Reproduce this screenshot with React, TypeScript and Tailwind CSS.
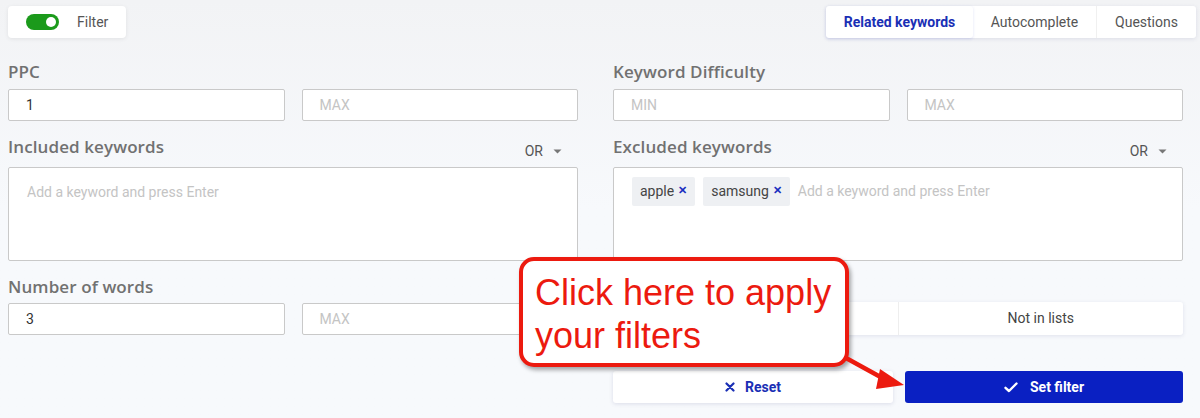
import React from "react";

const labelCls =
  "h-[24px] leading-[24px] text-[17px] font-semibold text-[#717171] [font-family:'Open_Sans',sans-serif] tracking-[0.1px]";
const inputCls =
  "h-[32px] flex-1 border border-[#c9c9c9] rounded-[2px] bg-white flex items-center pl-[17px] text-[14px]";

function NumInput({ value, placeholder }: { value?: string; placeholder: string }) {
  return (
    <div className={inputCls}>
      {value ? (
        <span className="text-[#333]">{value}</span>
      ) : (
        <span className="text-[#c4c4c4]">{placeholder}</span>
      )}
    </div>
  );
}

function OrSelect() {
  return (
    <div className="flex items-center gap-[10px] pr-[16px] translate-y-[4px] text-[14px] text-[#555]">
      <span>OR</span>
      <svg width="9" height="5" viewBox="0 0 9 5">
        <path d="M0.5 0.5 L8.5 0.5 L4.5 4.5 Z" fill="#777" />
      </svg>
    </div>
  );
}

function Tag({ text }: { text: string }) {
  return (
    <div className="h-[29px] flex items-center gap-[4px] px-[8px] bg-[#eef0f3] rounded-[2px] text-[14px] text-[#444]">
      <span>{text}</span>
      <span className="text-[#1a2fc0] text-[11px] font-bold">✕</span>
    </div>
  );
}

export default function App() {
  return (
    <div className="w-[1200px] h-[418px] relative overflow-hidden bg-gradient-to-b from-[#f2f3f5] via-[#f7f9fc] to-[#f7f9fc] [font-family:Roboto,sans-serif]">
      {/* header */}
      <div className="flex justify-between items-start pl-[8px] pr-[4px] pt-[6px]">
        <div className="h-[32px] w-[118px] bg-white rounded-[4px] shadow-[0_1px_4px_rgba(0,0,0,0.08)] flex items-center pl-[18px] gap-[18px]">
          <div className="w-[33px] h-[16px] rounded-full bg-[#1b9a1b] relative flex items-center justify-end pr-[3px]">
            <div className="w-[10px] h-[10px] rounded-full bg-white" />
          </div>
          <span className="text-[14px] text-[#555]">Filter</span>
        </div>
        <div className="h-[32px] flex bg-white rounded-[3px] shadow-[0_1px_4px_rgba(60,60,120,0.12)] text-[14px]">
          <div className="w-[147px] flex items-center justify-center font-bold text-[#1a2fb5] shadow-[0_1px_3px_rgba(50,60,200,0.15)] rounded-[3px]">
            Related keywords
          </div>
          <div className="w-[124px] flex items-center justify-center text-[#555] border-r border-[#f0f0f0]">
            Autocomplete
          </div>
          <div className="w-[99px] flex items-center justify-center text-[#555]">Questions</div>
        </div>
      </div>

      {/* body */}
      <div className="grid grid-cols-2 gap-x-[35px] pl-[8px] pr-[17px]">
        {/* left column */}
        <div className="flex flex-col">
          <div className={`${labelCls} mt-[22px]`}>PPC</div>
          <div className="flex gap-[17px] mt-[5px]">
            <NumInput value="1" placeholder="MIN" />
            <NumInput placeholder="MAX" />
          </div>
          <div className="flex justify-between items-center h-[24px] mt-[14px]">
            <div className={labelCls}>Included keywords</div>
            <OrSelect />
          </div>
          <div className="mt-[8px] h-[94px] border border-[#c9c9c9] rounded-[2px] bg-white pl-[18px] pt-[14px] text-[14px] text-[#c4c4c4]">
            Add a keyword and press Enter
          </div>
          <div className={`${labelCls} mt-[14px]`}>Number of words</div>
          <div className="flex gap-[17px] mt-[4px]">
            <NumInput value="3" placeholder="MIN" />
            <NumInput placeholder="MAX" />
          </div>
        </div>

        {/* right column */}
        <div className="flex flex-col">
          <div className={`${labelCls} mt-[22px]`}>Keyword Difficulty</div>
          <div className="flex gap-[17px] mt-[5px]">
            <NumInput placeholder="MIN" />
            <NumInput placeholder="MAX" />
          </div>
          <div className="flex justify-between items-center h-[24px] mt-[14px]">
            <div className={labelCls}>Excluded keywords</div>
            <OrSelect />
          </div>
          <div className="mt-[8px] h-[94px] border border-[#c9c9c9] rounded-[2px] bg-white pl-[18px] pt-[9px] flex items-start gap-[8px]">
            <Tag text="apple" />
            <Tag text="samsung" />
            <span className="h-[29px] flex items-center text-[14px] text-[#c4c4c4]">
              Add a keyword and press Enter
            </span>
          </div>
          <div className="h-[24px] mt-[14px]" />
          <div className="flex mt-[3px] h-[33px] bg-white shadow-[0_1px_4px_rgba(60,60,120,0.12)] rounded-[3px] text-[14px] text-[#444]">
            <div className="flex-1 border-r border-[#eee]" />
            <div className="flex-1 flex items-center justify-center">Not in lists</div>
          </div>
          <div className="flex gap-[12px] mt-[36px]">
            <button className="h-[32px] w-[280px] bg-white rounded-[3px] shadow-[0_1px_4px_rgba(60,60,120,0.15)] flex items-center justify-center gap-[10px] text-[14px] font-bold text-[#1a2fb5]">
              <svg width="10" height="10" viewBox="0 0 10 10">
                <path d="M1.5 1.5 L8.5 8.5 M8.5 1.5 L1.5 8.5" stroke="#1a2fb5" strokeWidth="2.2" strokeLinecap="round" />
              </svg>
              Reset
            </button>
            <button className="h-[32px] flex-1 bg-[#0a20c2] rounded-[3px] flex items-center justify-center gap-[12px] text-[14px] font-bold text-white">
              <svg width="14" height="11" viewBox="0 0 14 11">
                <path d="M1.5 5.8 L5 9 L12.5 1.5" stroke="white" strokeWidth="2.4" fill="none" strokeLinecap="round" strokeLinejoin="round" />
              </svg>
              Set filter
            </button>
          </div>
        </div>
      </div>

      {/* callout overlay */}
      <div className="absolute left-[519px] top-[257px] w-[330px] h-[110px] bg-white border-[4px] border-[#ec1a0f] rounded-[15px] shadow-[2px_3px_4px_rgba(0,0,0,0.35)] pl-[12px] pt-[10px] text-[36px] leading-[43px] text-[#ec1a0f] [font-family:'Liberation_Sans',Arial,sans-serif]">
        Click here to apply
        <br />
        your filters
      </div>
      <svg className="absolute left-[840px] top-[350px]" width="70" height="45" viewBox="0 0 70 45">
        <path d="M6 8 L46 30" stroke="#ec1a0f" strokeWidth="4.5" strokeLinecap="round" fill="none" />
        <path d="M40 19 L64 35 L36 39 Z" fill="#ec1a0f" />
      </svg>
    </div>
  );
}
